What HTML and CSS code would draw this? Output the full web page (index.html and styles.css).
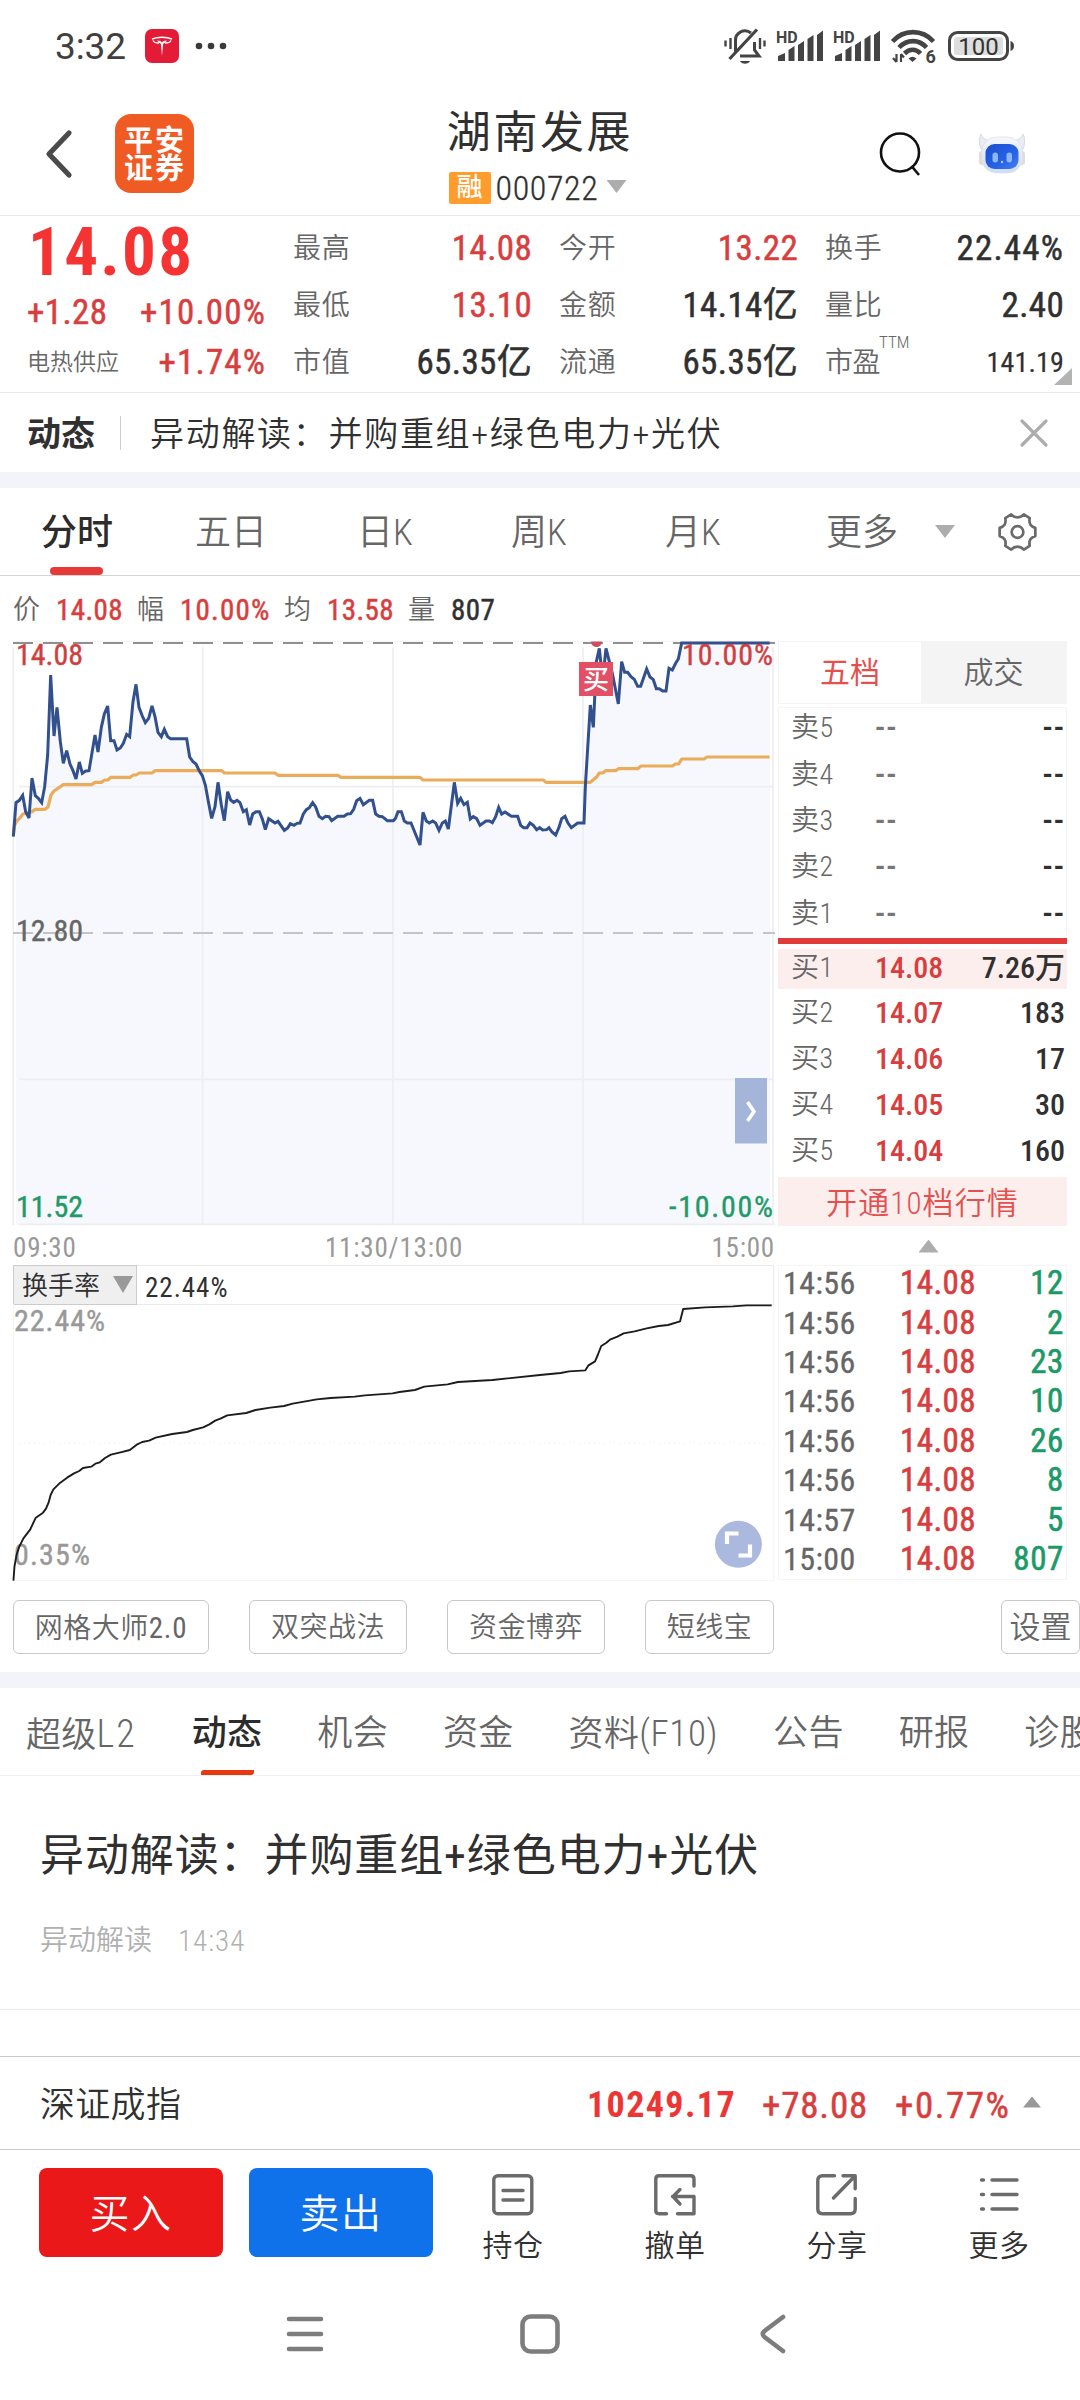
FILE: index.html
```html
<!DOCTYPE html>
<html lang="zh-CN">
<head>
<meta charset="utf-8">
<title>湖南发展 000722</title>
<link rel="stylesheet" href="styles.css">
</head>
<body>
<div class="statusbar">
  <span class="clock">3:32</span>
  <svg class="tesla" viewBox="0 0 34 34"><rect width="34" height="34" rx="7" fill="#e31b37"/><path d="M7 10.200c5-2.600 15-2.600 20 0M8 11.500c1 2 3.400 2.600 6 2.600M26 11.500c-1 2-3.400 2.600-6 2.600" fill="none" stroke="#fff" stroke-width="1.500"/><path d="M12 11.500c3 .2 4 .8 5 2 1-1.200 2-1.800 5-2l-2.500 2.700c-.8 0-1.300.3-1.400 1L17 27l-1.100-11.800c-.1-.7-.6-1-1.400-1z" fill="#fff"/></svg>
  <svg class="dots" viewBox="0 0 32 8"><g fill="#3a3a3a"><circle cx="4" cy="4" r="3.300"/><circle cx="16" cy="4" r="3.300"/><circle cx="28" cy="4" r="3.300"/></g></svg>
  <div class="sysicons">
    <svg width="42" height="38" viewBox="0 0 42 38" fill="none" stroke="#444" stroke-width="3"><path d="M11.500 25V14a9.500 9.500 0 0 1 15.500-8M16 29h19l-4.500-6V15"/><path d="M5.500 32L33 2.500" stroke-width="3.200"/><path d="M6.500 11v11M1.500 13.500v6M36 11v11M40.500 13.500v6" stroke-width="2.400"/><path d="M16 34h10c-1.500 3.600-8.500 3.600-10 0z" fill="#444" stroke="none"/></svg>
    <svg class="sig" width="47" height="32" viewBox="0 0 47 32"><text x="0" y="12.500" class="hd">HD</text><path d="M2 31v-5l7-3v8zM12.500 31V20l6-4v15zM22 31V15l6-4v20zM31.500 31V9l6-4v26zM41 31V5l6-4.500V31z" fill="#444"/></svg>
    <svg class="sig" width="47" height="32" viewBox="0 0 47 32"><text x="0" y="12.500" class="hd">HD</text><path d="M2 31v-5l7-3v8zM12.500 31V20l6-4v15zM22 31V15l6-4v20zM31.500 31V9l6-4v26zM41 31V5l6-4.500V31z" fill="#444"/></svg>
    <svg class="wifi" width="44" height="34" viewBox="0 0 44 34" fill="none" stroke="#444" stroke-width="4.600"><path d="M1.500 12.500c11-12.500 30-12.500 41 0M8 18.500c8-8.500 20-8.500 27.500 0M13.500 24.500c5-5 11.500-5 16 0"/><path d="M17.500 29.500q4-3.500 8 0l-4 3.500z" fill="#444" stroke="none"/><path d="M5.500 25v8M2 29l3.500 4M10 33v-8M10 25l3 3.500" stroke-width="2.200"/><text x="34.500" y="33.500" class="six">6</text></svg>
    <svg class="batt" width="67" height="31" viewBox="0 0 67 31"><rect x="1.500" y="1.500" width="58" height="27" rx="8" fill="none" stroke="#444" stroke-width="3"/><rect x="6" y="6" width="49" height="18" rx="3" fill="#dedede"/><path d="M62.500 10v10q3.500-1 3.500-5t-3.500-5z" fill="#444"/><text x="30.500" y="23.500" text-anchor="middle" class="pct">100</text></svg>
  </div>
</div>

<header class="header">
  <div class="header-side">
    <svg class="back" viewBox="0 0 26 48"><path d="M23 3L3 24l20 21" fill="none" stroke="#4a4a4a" stroke-width="5.200" stroke-linecap="round" stroke-linejoin="round"/></svg>
    <div class="logo">平安<br>证券</div>
  </div>
  <div class="header-title">
    <h1>湖南发展</h1>
    <div class="code"><b>融</b><span>000722</span><i class="tri down"></i></div>
  </div>
  <div class="header-side end">
    <svg width="42" height="46" viewBox="0 0 42 46" fill="none" stroke="#111" stroke-width="2.600"><circle cx="21" cy="21.500" r="19"/><path d="M32.500 35l7.500 9"/></svg>
    <svg width="48" height="42" viewBox="0 0 48 42"><defs><linearGradient id="helm" x1="0" y1="0" x2="0" y2="1"><stop offset="0" stop-color="#f6f7fb"/><stop offset="1" stop-color="#cfdcf5"/></linearGradient><linearGradient id="face" x1="0" y1="0" x2="1" y2="1"><stop offset="0" stop-color="#1a50d0"/><stop offset=".6" stop-color="#2761e4"/><stop offset="1" stop-color="#4580f5"/></linearGradient></defs><path d="M3 1C.5 6 1 12 3.500 17l8-9.500C7 7 4.500 4.500 3 1zM45 1c2.500 5 2 11-.5 16l-8-9.500C41 7 43.500 4.500 45 1z" fill="#e9ecf3" stroke="#cfd4e2" stroke-width=".8"/><rect x="1" y="18" width="6" height="14" rx="3" fill="#ead9d9"/><rect x="41" y="18" width="6" height="14" rx="3" fill="#ead9d9"/><rect x="3.500" y="4" width="41" height="36" rx="15" fill="url(#helm)" stroke="#dbe1ef" stroke-width=".8"/><rect x="7.500" y="11" width="33" height="25" rx="9" fill="url(#face)"/><rect x="14.500" y="19.500" width="5.500" height="10" rx="2.700" fill="#8db8f8"/><rect x="28.500" y="19.500" width="5.500" height="10" rx="2.700" fill="#8db8f8"/><circle cx="24" cy="29" r="1.200" fill="#a9cdfb"/></svg>
  </div>
</header>

<section class="quote">
  <div class="price">14.08</div>
  <div class="pair"><label>最高</label><span class="red">14.08</span></div>
  <div class="pair"><label>今开</label><span class="red">13.22</span></div>
  <div class="pair"><label>换手</label><span class="rate">22.44%</span></div>
  <div class="pair change"><span class="red">+1.28</span><span class="red rate">+10.00%</span></div>
  <div class="pair"><label>最低</label><span class="red">13.10</span></div>
  <div class="pair"><label>金额</label><span>14.14亿</span></div>
  <div class="pair"><label>量比</label><span>2.40</span></div>
  <div class="pair"><label class="sector">电热供应</label><span class="red rate">+1.74%</span></div>
  <div class="pair"><label>市值</label><span>65.35亿</span></div>
  <div class="pair"><label>流通</label><span>65.35亿</span></div>
  <div class="pair"><label class="pe">市盈<sup>TTM</sup></label><span class="small">141.19</span></div>
  <svg class="corner" viewBox="0 0 18 17"><path d="M18 0v17H0z" fill="#b3b3b3"/></svg>
</section>

<section class="news-strip">
  <b>动态</b><i></i><span>异动解读：并购重组+绿色电力+光伏</span>
  <svg viewBox="0 0 28 28"><path d="M2 2l24 24M26 2L2 26" stroke="#adadad" stroke-width="3.200" stroke-linecap="round"/></svg>
</section>

<nav class="period">
  <a class="on">分时</a><a>五日</a><a>日K</a><a>周K</a><a>月K</a><a class="more">更多</a><i class="tri down"></i>
  <svg viewBox="0 0 40 40" fill="none" stroke="#6a6a6a" stroke-width="2.800" stroke-linejoin="round"><path d="M13.500 2q3 3 6.500 3t6.500-3l6 3.800q-.8 4.500.8 6.800t5 3.200v8.400q-3.400.9-5 3.200t-.8 6.800l-6 3.800q-3-3-6.500-3t-6.500 3l-6-3.800q.8-4.500-.8-6.800t-5-3.200v-8.400q3.400-.9 5-3.200t.8-6.800z"/><circle cx="20" cy="20" r="6"/></svg>
</nav>

<div class="legend">
  <label>价</label><b class="red">14.08</b><label>幅</label><b class="red rate">10.00%</b><label>均</label><b class="red">13.58</b><label>量</label><b>807</b>
</div>

<main class="market">
  <div class="charts">
    <div class="pricechart">
      <svg width="776" height="586" viewBox="0 640 776 586">
        <g transform="translate(0 620) scale(.33333)" fill="none">
          <path fill="#f6f8fd" d="M48 1815V548L58 541 68 526 77 575 87 594 96 474 106 527 115 535 125 548 134 500 143 405 152 165 162 348 171 262 181 365 190 430 200 392 210 432 219 452 228 477 238 426 247 460 257 453 267 452 285 345 294 396 304 322 313 282 323 258 332 362 342 362 351 390 361 384 370 370 380 343 389 350 399 245 408 193 417 262 427 288 436 308 446 295 456 258 465 290 474 337 484 350 493 328 503 350 512 356 560 356 569 411 579 425 588 432 598 453 607 467 616 495 626 550 635 595 645 560 654 487 664 555 673 602 683 515 692 540 701 547 711 541 720 548 730 575 739 569 749 615 758 582 768 575 778 575 787 597 796 629 806 596 825 609 834 604 853 631 863 624 871 611 882 616 891 610 900 609 910 582 919 569 928 563 938 548 947 561 957 589 967 596 977 589 987 590 995 602 1013 589 1032 589 1042 582 1052 581 1061 568 1070 542 1080 535 1090 554 1108 541 1118 541 1127 582 1137 589 1147 590 1162 602 1180 602 1186 596 1194 575 1204 575 1213 603 1222 609 1233 609 1260 675 1269 577 1279 603 1288 609 1298 603 1307 609 1317 631 1327 609 1336 603 1345 627 1363 487 1373 550 1382 535 1392 554 1402 547 1411 597 1420 590 1430 596 1440 616 1458 603 1468 603 1477 608 1487 590 1496 562 1505 582 1515 576 1534 589 1553 589 1562 616 1571 623 1581 623 1590 609 1600 616 1610 629 1619 623 1628 630 1640 629 1647 623 1656 636 1667 645 1677 622 1685 596 1695 589 1704 609 1714 623 1733 609 1752 609 1756 500 1771 255 1780 322 1789 125 1798 85 1808 180 1818 85 1837 160 1855 252 1865 125 1874 157 1883 157 1893 170 1903 178 1913 199 1922 199 1940 147 1950 171 1960 179 1969 206 1978 206 1988 213 1998 213 2007 145 2017 150 2027 130 2035 117 2045 69 2310 69V1815z"/>
          <path stroke="#eceef2" stroke-width="5" d="M40 82V1815M608 82V1815M1179 82V1815M1749 82V1815M2319 82V1815M58 500H2320M58 1378H2320M58 1813H2325"/>
          <path stroke="#f3f3f5" stroke-width="3" d="M40 64H2325"/>
          <path stroke="#8f8f8f" stroke-width="6" stroke-dasharray="60 30" d="M39 69H2325"/>
          <path stroke="#c3c4c8" stroke-width="6" stroke-dasharray="60 30" d="M39 939H2325"/>
          <path stroke="#eaac58" stroke-width="9.500" stroke-linejoin="round" d="M41 640L43 618 50 603 58 596 68 583 78 580 96 575 106 568 135 568 144 561 153 525 162 513 190 494 275 494 285 487 304 487 314 480 323 480 333 472 390 472 400 465 408 465 418 459 456 459 465 452 665 452 673 459 825 459 834 466 1014 466 1023 472 1260 472 1269 480 1630 480 1638 487 1771 487 1789 472 1798 459 1808 459 1817 452 1847 452 1855 446 1913 446 1923 438 2017 438 2026 432 2036 432 2045 417 2112 417 2121 411 2309 411"/>
          <path stroke="#31508d" stroke-width="9" stroke-linejoin="miter" stroke-miterlimit="3" d="M40 650L48 548 58 541 68 526 77 575 87 594 96 474 106 527 115 535 125 548 134 500 143 405 152 165 162 348 171 262 181 365 190 430 200 392 210 432 219 452 228 477 238 426 247 460 257 453 267 452 285 345 294 396 304 322 313 282 323 258 332 362 342 362 351 390 361 384 370 370 380 343 389 350 399 245 408 193 417 262 427 288 436 308 446 295 456 258 465 290 474 337 484 350 493 328 503 350 512 356 560 356 569 411 579 425 588 432 598 453 607 467 616 495 626 550 635 595 645 560 654 487 664 555 673 602 683 515 692 540 701 547 711 541 720 548 730 575 739 569 749 615 758 582 768 575 778 575 787 597 796 629 806 596 825 609 834 604 853 631 863 624 871 611 882 616 891 610 900 609 910 582 919 569 928 563 938 548 947 561 957 589 967 596 977 589 987 590 995 602 1013 589 1032 589 1042 582 1052 581 1061 568 1070 542 1080 535 1090 554 1108 541 1118 541 1127 582 1137 589 1147 590 1162 602 1180 602 1186 596 1194 575 1204 575 1213 603 1222 609 1233 609 1260 675 1269 577 1279 603 1288 609 1298 603 1307 609 1317 631 1327 609 1336 603 1345 627 1363 487 1373 550 1382 535 1392 554 1402 547 1411 597 1420 590 1430 596 1440 616 1458 603 1468 603 1477 608 1487 590 1496 562 1505 582 1515 576 1534 589 1553 589 1562 616 1571 623 1581 623 1590 609 1600 616 1610 629 1619 623 1628 630 1640 629 1647 623 1656 636 1667 645 1677 622 1685 596 1695 589 1704 609 1714 623 1733 609 1752 609 1756 500 1771 255 1780 322 1789 125 1798 85 1808 180 1818 85 1837 160 1855 252 1865 125 1874 157 1883 157 1893 170 1903 178 1913 199 1922 199 1940 147 1950 171 1960 179 1969 206 1978 206 1988 213 1998 213 2007 145 2017 150 2027 130 2035 117 2045 69 2309 69"/>
        </g>
        <path d="M591 641.500h11a5.500 5.500 0 0 1-11 0z" fill="#c9505f"/>
        <rect x="579" y="662" width="34" height="34" fill="#e35066"/>
        <text class="mark" x="596" y="688.500" text-anchor="middle">买</text>
        <g class="axis">
          <text x="16" y="665" class="up" textLength="67">14.08</text>
          <text x="682" y="665" class="up" textLength="91">10.00%</text>
          <text x="16" y="940.500" class="flat" textLength="67">12.80</text>
          <text x="16" y="1216.700" class="dn" textLength="67">11.52</text>
          <text x="669" y="1216.700" class="dn" textLength="104">-10.00%</text>
        </g>
        <rect x="735" y="1078" width="32" height="65.500" fill="#a5b4d9"/>
        <path d="M747.500 1102l6.500 9.500-6.500 9.500" fill="none" stroke="#fff" stroke-width="3.500"/>
      </svg>
    </div>
    <div class="times"><span>09:30</span><span>11:30/13:00</span><span>15:00</span></div>
    <div class="indicator"><button>换手率<i class="tri down"></i></button><span>22.44%</span></div>
    <div class="subchart">
      <svg width="776" height="278" viewBox="0 1304 776 278">
        <path d="M13.500 1304V1580.500H774V1304" fill="none" stroke="#f5f5f5"/>
        <path d="M19 1443H770" stroke="#eee" stroke-dasharray="1 4"/>
        <g class="axis"><text x="14" y="1331" class="soft" textLength="91">22.44%</text><text x="14" y="1565" class="soft" textLength="76">0.35%</text></g>
        <path transform="translate(0 1180) scale(.34435 .33333)" fill="none" stroke="#1c1c1c" stroke-width="1.900" vector-effect="non-scaling-stroke" stroke-linejoin="round" d="M39 1202L42 1160 48 1125 56 1100 68 1075 88 1048 97 1028 104 1013 125 998 134 985 141 968 147 945 155 928 175 908 195 893 215 880 230 873 241 864 265 860 277 851 290 847 305 834 322 824 350 817 377 810 397 794 413 786 433 782 452 773 500 762 543 756 560 750 590 742 608 733 625 722 640 716 660 706 715 699 742 690 785 683 825 678 850 671 920 658 960 654 1030 650 1060 646 1140 640 1160 636 1205 630 1232 620 1300 613 1330 606 1430 600 1568 585 1628 579 1653 574 1700 571 1709 556 1728 544 1736 525 1746 498 1760 489 1773 478 1793 470 1811 460 1843 454 1878 445 1913 438 1940 435 1975 424 1984 387 2048 382 2128 379 2168 376 2241 376"/>
        <circle cx="738.400" cy="1544.300" r="23.500" fill="#abb9df"/>
        <path d="M727 1544v-10.500h11.500M750 1544.500V1555.500h-11.500" fill="none" stroke="#fff" stroke-width="4.200"/>
      </svg>
    </div>
  </div>

  <aside class="book">
    <div class="booktabs"><span class="on">五档</span><span>成交</span></div>
    <div class="asks">
      <div class="lvl"><label>卖5</label><em>--</em><b>--</b></div>
      <div class="lvl"><label>卖4</label><em>--</em><b>--</b></div>
      <div class="lvl"><label>卖3</label><em>--</em><b>--</b></div>
      <div class="lvl"><label>卖2</label><em>--</em><b>--</b></div>
      <div class="lvl"><label>卖1</label><em>--</em><b>--</b></div>
    </div>
    <div class="bids">
      <div class="lvl hot"><label>买1</label><em>14.08</em><b>7.26万</b></div>
      <div class="lvl"><label>买2</label><em>14.07</em><b>183</b></div>
      <div class="lvl"><label>买3</label><em>14.06</em><b>17</b></div>
      <div class="lvl"><label>买4</label><em>14.05</em><b>30</b></div>
      <div class="lvl"><label>买5</label><em>14.04</em><b>160</b></div>
    </div>
    <div class="cta">开通10档行情</div>
    <div class="fold"><i class="tri up"></i></div>
    <div class="ticks">
      <div><span>14:56</span><em>14.08</em><b>12</b></div>
      <div><span>14:56</span><em>14.08</em><b>2</b></div>
      <div><span>14:56</span><em>14.08</em><b>23</b></div>
      <div><span>14:56</span><em>14.08</em><b>10</b></div>
      <div><span>14:56</span><em>14.08</em><b>26</b></div>
      <div><span>14:56</span><em>14.08</em><b>8</b></div>
      <div><span>14:57</span><em>14.08</em><b>5</b></div>
      <div><span>15:00</span><em>14.08</em><b>807</b></div>
    </div>
  </aside>
</main>

<div class="tools">
  <button class="w1">网格大师<span>2.0</span></button><button class="w2">双突战法</button><button class="w2">资金博弈</button><button class="w3">短线宝</button><button class="set">设置</button>
</div>

<nav class="sections">
  <a>超级<span>L2</span></a><a class="on">动态</a><a>机会</a><a>资金</a><a>资料<span class="f10">(F10)</span></a><a>公告</a><a>研报</a><a>诊股</a>
</nav>

<article class="post">
  <h2>异动解读：并购重组+绿色电力+光伏</h2>
  <p><span>异动解读</span><time>14:34</time></p>
</article>

<div class="index">
  <span>深证成指</span><strong>10249.17</strong><em>+78.08</em><em class="chg">+0.77%</em><i class="tri up"></i>
</div>

<footer class="actions">
  <button class="buy">买入</button><button class="sell">卖出</button>
  <a><svg viewBox="0 0 42 42"><rect x="1.800" y="1.800" width="38" height="38" rx="4"/><path d="M11 16.500h20M11 26h20"/></svg>持仓</a>
  <a><svg viewBox="0 0 42 42"><path d="M40 12V5q0-3.200-3.200-3.200H5Q1.800 1.800 1.800 5v31.500q0 3.200 3.200 3.200h7.500M23.500 39.700H40V22.500H18.500M26 15.500l-7 7 7 7.500"/></svg>撤单</a>
  <a><svg viewBox="0 0 42 42"><path d="M18.500 1.800H6.500Q1.800 1.800 1.800 6.500v28.500q0 4.700 4.700 4.700h28q4.700 0 4.700-4.700V24.500M27 1.800h12.200v13M38 3L17.500 24"/></svg>分享</a>
  <a><svg viewBox="0 0 42 42"><path d="M3.500 6h2M14 6h25M3.500 20.500h2M14 20.500h25M3.500 35h2M14 35h25"/></svg>更多</a>
</footer>

<div class="sysnav">
  <svg viewBox="0 0 40 40"><path d="M4 5h32M4 20h32M4 35h32"/></svg>
  <svg viewBox="0 0 40 40"><rect x="2.500" y="2.500" width="35" height="35" rx="8"/></svg>
  <svg viewBox="0 0 40 40"><path d="M28 3L9.500 17q-3.500 3 0 6L28 37"/></svg>
</div>
</body>
</html>
```
FILE: styles.css
```css
* { box-sizing: border-box; margin: 0; padding: 0; }
body {
  width: 1080px; height: 2400px; overflow: hidden; background: #fff; color: #303030;
  font-family: "Roboto Condensed", Roboto, "Noto Sans CJK SC", sans-serif;
  line-height: 1.2; white-space: nowrap;
}
svg { display: block; flex: none; overflow: visible; }
button { font: inherit; border: 0; background: none; }
em, i { font-style: normal; }
.red { color: #d83e3e; }
.tri { display: block; flex: none; width: 20px; height: 13px; background: #adadad; }
.tri.down { clip-path: polygon(0 0, 100% 0, 50% 100%); }
.tri.up { clip-path: polygon(50% 0, 100% 100%, 0 100%); }

.statusbar { height: 92px; padding: 0 65px 0 55px; display: flex; align-items: center; color: #3f3f3f; }
.clock { width: 90px; font: 400 37px Roboto, sans-serif; letter-spacing: -.1px; }
.tesla { width: 34px; height: 34px; }
.dots { width: 32px; height: 8px; margin-left: 16px; }
.sysicons { margin-left: auto; display: flex; align-items: center; gap: 10px; }
.sysicons .wifi { margin-left: 1px; margin-right: 3px; }
.hd { font: 700 16px Roboto, sans-serif; fill: #444; }
.six { font: 700 18px Roboto, sans-serif; fill: #444; stroke: none; }
.pct { font: 400 24px Roboto, sans-serif; fill: #333; }

.header { height: 124px; border-bottom: 1px solid #e9e9e9; display: grid; grid-template-columns: 1fr 220px 1fr; }
.header-side { display: flex; align-items: center; padding-left: 46px; }
.header-side.end { justify-content: flex-end; padding: 0 54px 0 0; gap: 57px; }
.back { width: 26px; height: 48px; }
.logo { width: 79px; height: 79px; margin-left: 43px; padding: 10px 0 0 9px; border-radius: 16px; background: #f05b24; color: #fff; font: 700 29px/28px "Noto Sans CJK SC", sans-serif; letter-spacing: 2px; }
.header-title { display: flex; flex-direction: column; align-items: center; padding-top: 11px; }
.header-title h1 { font-weight: 400; font-size: 44px; line-height: 60px; letter-spacing: 2.600px; }
.code { display: flex; align-items: center; margin-top: 5px; height: 40px; padding-right: 5px; }
.code b { width: 42px; height: 32px; border-radius: 2px; background: #ff9c2b; color: #fff; font-size: 26px; line-height: 31px; text-align: center; font-weight: 500; }
.code span { font-size: 34px; font-weight: 300; margin-left: 5px; width: 103px; letter-spacing: .6px; -webkit-text-stroke: .3px; }
.code i { margin-left: 8px; margin-top: -3px; }

.quote { height: 177px; padding: 4px 0 0 27px; border-bottom: 1px solid #e9e9e9; display: grid; grid-template-columns: repeat(4, 239.200px); grid-template-rows: repeat(3, 57px); column-gap: 26.800px; position: relative; }
.price { font-size: 67px; font-weight: 700; color: #f53333; line-height: 64px; letter-spacing: 2.300px; padding-left: 1px; }
.pair { display: flex; align-items: center; justify-content: space-between; font-size: 35px; font-weight: 400; -webkit-text-stroke: .5px; letter-spacing: .4px; }
.pair .rate { letter-spacing: 1.200px; }
.pair.change { padding-top: 15px; }
.pair label { font-size: 28px; font-weight: 350; color: #666; letter-spacing: .8px; -webkit-text-stroke: 0; }
.pair .sector { font-size: 23px; letter-spacing: 0; }
.pair .pe { letter-spacing: -.5px; position: relative; }
.pe sup { position: absolute; left: 54px; top: -14px; font-size: 17px; line-height: 20px; letter-spacing: 0; }
.pair .small { font-size: 28px; -webkit-text-stroke: .2px; letter-spacing: .2px; }
.corner { position: absolute; right: 8px; bottom: 7px; width: 18px; height: 17px; }

.news-strip { height: 79px; display: flex; align-items: center; padding: 3px 32px 0 27px; font-size: 34px; }
.news-strip b { font-weight: 700; }
.news-strip i { width: 1px; height: 34px; background: #ccc; margin-left: 25px; margin-bottom: 3px; }
.news-strip span { margin-left: 29px; font-weight: 350; letter-spacing: 1.700px; }
.news-strip svg { width: 28px; height: 28px; margin: -2px 0 0 auto; }

.period { height: 104px; border-top: 16px solid #f2f4f9; border-bottom: 1px solid #d4d4d4; display: flex; align-items: center; font-size: 36px; color: #666; }
.period a { width: 154px; height: 87px; line-height: 90px; text-align: center; position: relative; font-weight: 350; }
.period .more { width: 184px; }
.period .on { color: #2c2c2c; font-weight: 500; }
.period .on::after { content: ""; position: absolute; left: 50px; bottom: 0; width: 53px; height: 8px; border-radius: 4px; background: #e63a38; }
.period svg { width: 39px; height: 40px; margin-left: 43px; }
.period i { margin-left: -19px; }

.legend { height: 64px; padding: 4px 0 0 13px; display: flex; align-items: center; font-size: 29px; }
.legend label { width: 43px; font-size: 27px; font-weight: 350; color: #666; }
.legend b { font-weight: 400; margin-right: 15px; -webkit-text-stroke: .5px; width: 66px; letter-spacing: .4px; }
.legend .rate { width: 89px; letter-spacing: 1.200px; }
.legend .red + label { margin-left: 0; }

.market { display: flex; height: 941px; }
.charts { width: 778px; }
.pricechart { height: 586px; }
.axis { font-size: 30px; font-weight: 400; stroke-width: .4px; }
.up { fill: #d03f3f; stroke: #d03f3f; }
.dn { fill: #1f9a68; stroke: #1f9a68; }
.flat { fill: #666; stroke: #666; }
.soft { fill: #999; stroke: #999; }
.mark { font-size: 26px; font-weight: 500; fill: #fff; }
.times { height: 39px; padding: 5px 3px 0 13px; display: flex; justify-content: space-between; align-items: center; font-size: 27px; font-weight: 400; color: #999; letter-spacing: .8px; }
.indicator { height: 40px; margin: 0 4px 0 13px; border: 1px solid #eaeaea; display: flex; align-items: stretch; }
.indicator button { width: 124px; margin: -1px 0 -1px -1px; border: 1px solid #ccc; background: #efefef; display: flex; align-items: center; justify-content: space-between; padding: 4px 3px 0 8px; font-size: 26px; font-weight: 350; color: #303030; }
.indicator i { height: 17px; background: #999; margin-top: -5px; }
.indicator span { margin-left: 8px; font-size: 27px; line-height: 44px; font-weight: 400; letter-spacing: 1px; }
.subchart { margin-top: -1px; height: 278px; }

.book { width: 289px; }
.booktabs { height: 63px; margin-top: 1px; display: flex; border: 1px solid #f4f4f4; font-size: 30px; color: #666; }
.booktabs span { flex: 1; text-align: center; line-height: 61px; background: #f4f4f4; font-weight: 350; }
.booktabs .on { flex: 0 0 142px; background: #fff; color: #e4504e; font-weight: 400; }
.asks { margin-top: 3px; height: 231px; border: 1px solid #f5f5f5; border-bottom: 0; }
.lvl { height: 46.300px; padding: 0 2px 0 13px; display: flex; align-items: center; }
.asks .lvl { position: relative; top: -3px; padding: 0 1px 0 12px; }
.lvl label { width: 84px; font-size: 28px; font-weight: 350; color: #666; letter-spacing: .6px; }
.lvl em { font-size: 30px; font-weight: 500; color: #d83e3e; }
.lvl b { margin-left: auto; font-size: 30px; font-weight: 500; color: #303030; }
.asks em, .asks b { font-size: 33px; letter-spacing: 1px; }
.asks em { color: #777; }
.bids { border-top: 6px solid #e03a3a; padding-top: 5px; height: 239px; }
.bids .lvl { height: 46px; position: relative; top: 1px; }
.bids .lvl.hot { background: #fdeeee; height: 40px; padding-bottom: 3px; top: 0; }
.cta { height: 49px; background: #fdeeee; color: #e4504e; text-align: center; font-size: 31px; line-height: 53px; font-weight: 350; letter-spacing: 1.100px; }
.fold { height: 40px; display: flex; justify-content: center; align-items: center; padding-left: 12px; }
.ticks { height: 315px; margin-top: -1px; border: 1px solid #f5f5f5; padding: 0 2px 0 4px; }
.ticks div { height: 39.400px; display: flex; align-items: center; font-size: 32px; line-height: 32px; position: relative; top: -2.500px; }
.ticks span { width: 117px; color: #666; font-weight: 400; letter-spacing: .4px; -webkit-text-stroke: .3px; }
.ticks em { color: #d83e3e; font-weight: 400; font-size: 33px; letter-spacing: .4px; -webkit-text-stroke: .6px; }
.ticks b { margin-left: auto; color: #1b9a68; font-weight: 400; font-size: 33px; letter-spacing: .6px; -webkit-text-stroke: .6px; }

.tools { height: 91px; padding: 19px 0 0 13px; display: flex; }
.tools button { height: 54px; border: 1px solid #c9c9c9; border-radius: 6px; font-size: 28px; line-height: 54px; color: #666; font-weight: 350; margin-right: 40px; letter-spacing: .5px; }
.tools span { font-weight: 400; font-size: 29px; letter-spacing: .8px; }
.w1 { width: 196px; }
.w2 { width: 158px; }
.w3 { width: 129px; }
.tools .set { width: 79px; margin: 0 0 0 auto; font-size: 31px; letter-spacing: 0; }

.sections { height: 104px; border-top: 16px solid #f2f4f9; border-bottom: 1px solid #f0f0f0; padding-left: 26px; display: flex; gap: 55px; font-size: 35px; color: #666; }
.sections a { flex: none; line-height: 92px; position: relative; font-weight: 350; letter-spacing: .3px; }
.sections span { font-size: 38px; letter-spacing: 2px; }
.sections .f10 { font-size: 37px; letter-spacing: .6px; }
.sections .on { color: #2c2c2c; font-weight: 500; }
.sections .on::after { content: ""; position: absolute; left: 9px; bottom: 0; width: 53px; height: 5.500px; border-radius: 3px 0 3px 0; background: #e8380f; }

.post { height: 234px; padding: 48px 40px 0; border-bottom: 1px solid #ececec; }
.post h2 { font-size: 44px; line-height: 64px; font-weight: 400; letter-spacing: .9px; }
.post p { margin-top: 34px; font-size: 28px; line-height: 38px; display: flex; gap: 26px; color: #b0b0b0; font-weight: 350; }
.post time { letter-spacing: 1px; font-size: 29px; }

.index { margin-top: 46px; height: 94px; border-top: 1px solid #c9c9c9; border-bottom: 1px solid #c9c9c9; padding: 6px 39px 0 40px; display: flex; align-items: center; font-size: 35px; }
.index span { margin-right: auto; font-weight: 350; letter-spacing: .3px; }
.index strong { font-size: 36px; font-weight: 700; color: #ee3535; width: 175px; letter-spacing: 1.400px; }
.index em { font-size: 37px; font-weight: 400; color: #d83e3e; width: 133px; letter-spacing: .8px; -webkit-text-stroke: .5px; }
.index .chg { width: 128px; letter-spacing: 1.500px; }
.index i { width: 18px; height: 11px; background: #999; margin-top: -8px; }

.actions { height: 130px; padding: 18px 0 0 39px; display: flex; align-items: flex-start; }
.actions button { width: 184px; height: 89px; border-radius: 8px; color: #fff; font-size: 40px; font-weight: 350; letter-spacing: 1.500px; line-height: 94px; margin-right: 26px; }
.buy { background: #ea1818; }
.sell { background: #1072eb; }
.actions a { width: 162px; height: 100px; margin-top: 6px; display: flex; flex-direction: column; align-items: center; font-size: 30px; line-height: 60px; font-weight: 350; letter-spacing: .5px; }
.actions .sell { margin-right: -1px; }
.actions svg { width: 42px; height: 42px; fill: none; stroke: #6b6b6b; stroke-width: 3.400; stroke-linecap: round; stroke-linejoin: round; }

.sysnav { height: 110px; display: flex; justify-content: center; gap: 195px; padding-top: 34px; }
.sysnav svg { width: 40px; height: 40px; fill: none; stroke: #7d7d7d; stroke-width: 4.600; stroke-linecap: round; }
```
